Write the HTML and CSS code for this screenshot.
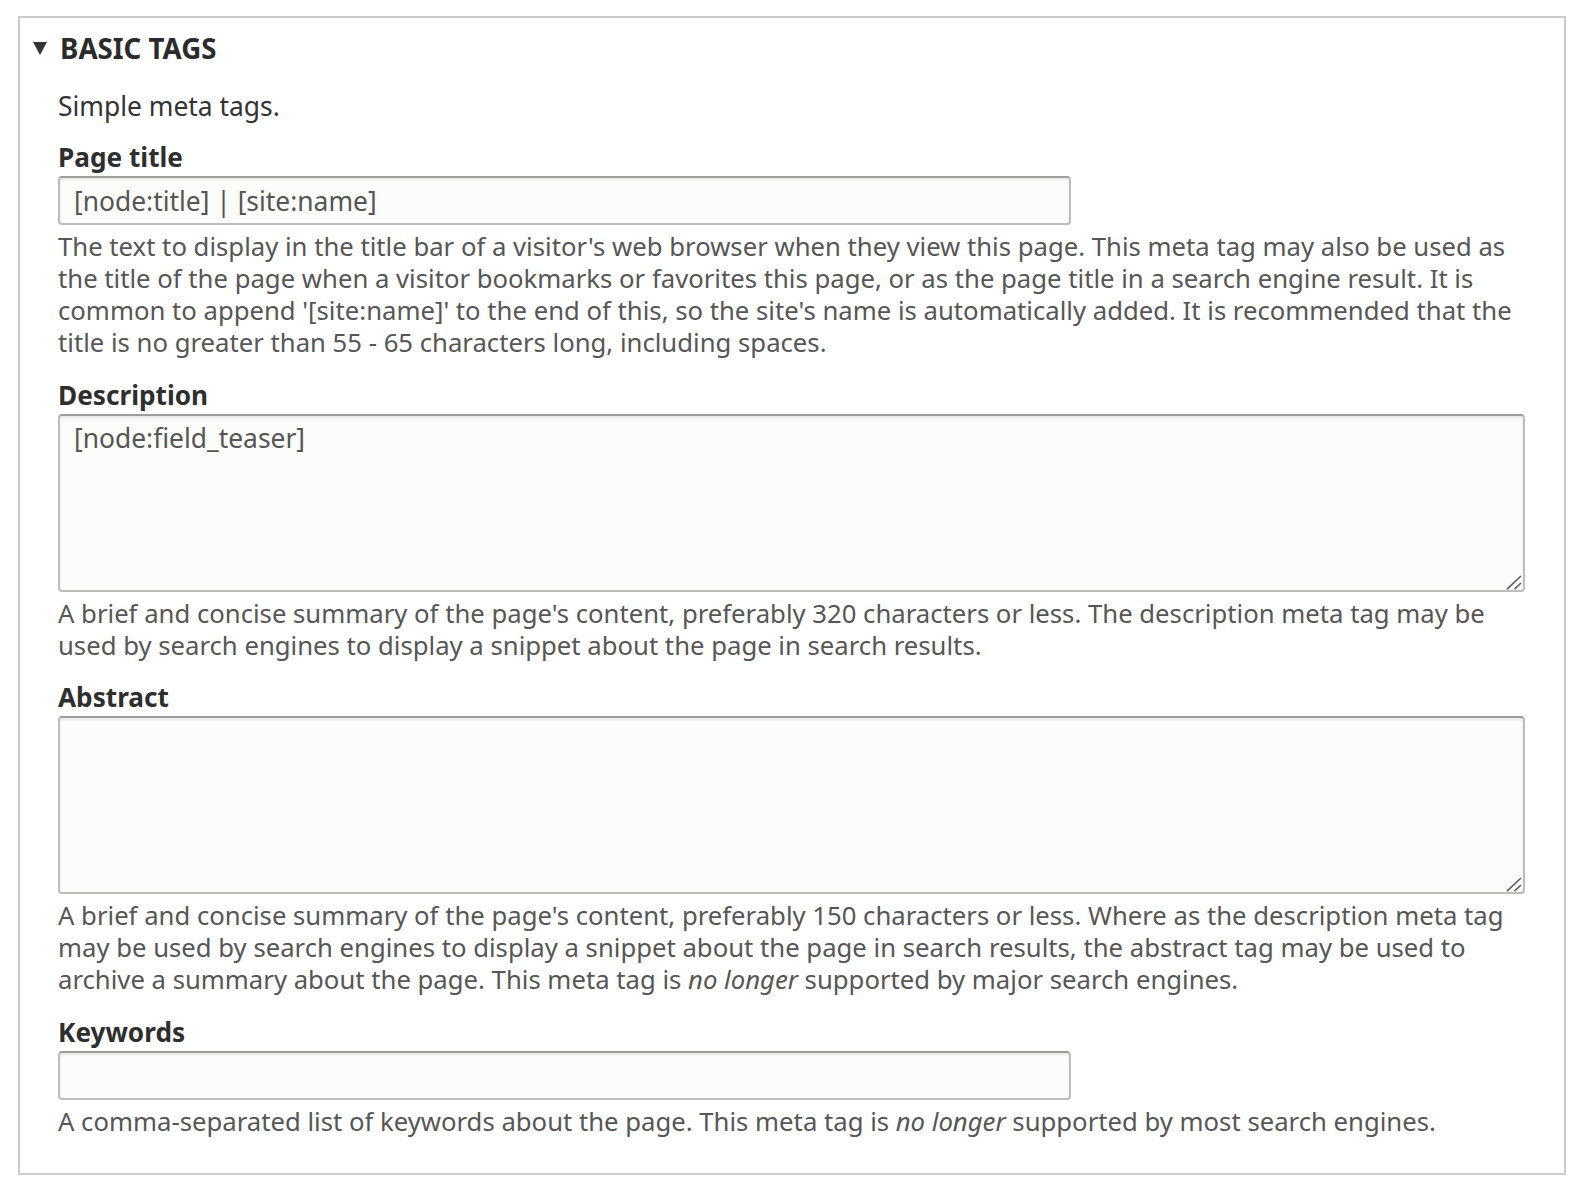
FILE: index.html
```html
<!DOCTYPE html>
<html lang="en">
<head>
<meta charset="utf-8">
<title>Basic tags</title>
<link rel="stylesheet" href="styles.css">
</head>
<body>
<div class="fieldset">
  <div class="summary">
    <svg class="caret" width="14" height="13" viewBox="0 0 14 13" aria-hidden="true"><polygon points="0,0 14,0 7,13" fill="#333"/></svg>
    <span class="summary-title">Basic tags</span>
  </div>
  <div class="fieldset-body">
    <p class="intro">Simple meta tags.</p>

    <div class="form-item">
      <label class="form-label" for="f-title">Page title</label>
      <input class="form-text" id="f-title" type="text" value="[node:title] | [site:name]">
      <div class="description">The text to display in the title bar of a visitor's web browser when they view this page. This meta tag may also be used as the title of the page when a visitor bookmarks or favorites this page, or as the page title in a search engine result. It is common to append '[site:name]' to the end of this, so the site's name is automatically added. It is recommended that the title is no greater than 55 - 65 characters long, including spaces.</div>
    </div>

    <div class="form-item">
      <label class="form-label" for="f-desc">Description</label>
      <div class="textarea-wrap">
        <textarea class="form-textarea" id="f-desc">[node:field_teaser]</textarea>
        <svg class="grip" width="16" height="15" viewBox="0 0 16 15" aria-hidden="true"><path d="M1 14.2 L15 1 M8.5 14.2 L15 8" stroke="#5e5e5e" stroke-width="1.6" fill="none"/></svg>
      </div>
      <div class="description">A brief and concise summary of the page's content, preferably 320 characters or less. The description meta tag may be used by search engines to display a snippet about the page in search results.</div>
    </div>

    <div class="form-item">
      <label class="form-label" for="f-abstract">Abstract</label>
      <div class="textarea-wrap">
        <textarea class="form-textarea" id="f-abstract"></textarea>
        <svg class="grip" width="16" height="15" viewBox="0 0 16 15" aria-hidden="true"><path d="M1 14.2 L15 1 M8.5 14.2 L15 8" stroke="#5e5e5e" stroke-width="1.6" fill="none"/></svg>
      </div>
      <div class="description"><span>A brief and concise summary of the page's content, preferably 150 characters or less. Where as the description meta tag may be used by search engines to display a snippet about the page in search results, the abstract tag may be used to</span> <span>archive a summary about the page. This meta tag is</span> <em>no longer</em> supported by major search engines.</div>
    </div>

    <div class="form-item">
      <label class="form-label" for="f-keywords">Keywords</label>
      <input class="form-text" id="f-keywords" type="text" value="">
      <div class="description">A comma-separated list of keywords about the page. This meta tag is <em>no longer</em> supported by most search engines.</div>
    </div>
  </div>
</div>
</body>
</html>
```
FILE: styles.css
```css
* {
  box-sizing: border-box;
}

html {
  background: #fff;
}

body {
  margin: 0;
  padding: 16px 22px 17px 18px;
  font-family: "Noto Sans", "DejaVu Sans", sans-serif;
  color: #333;
}

.fieldset {
  border: 2px solid #ccc;
  padding: 14px 39px 35.5px 13px;
}

.summary {
  display: flex;
  align-items: center;
  gap: 13px;
  height: 32px;
}

.caret {
  display: block;
  flex: none;
}

.summary-title {
  font-weight: 700;
  font-size: 27.7px;
  line-height: 32px;
  text-transform: uppercase;
  color: #2b2b2b;
}

.fieldset-body {
  padding-left: 25px;
}

.intro {
  margin: 26px 0 19px;
  font-size: 26.4px;
  line-height: 32px;
  color: #333;
}

.form-item + .form-item {
  margin-top: 19.5px;
}

.form-label {
  display: block;
  margin-bottom: 3px;
  font-weight: 700;
  font-size: 26.2px;
  line-height: 32px;
  color: #2e2e2e;
}

.form-text,
.form-textarea {
  display: block;
  margin: 0;
  font-family: "Noto Sans", "DejaVu Sans", sans-serif;
  font-size: 26.4px;
  color: #555;
  background: #fcfcfa;
  border: 2px solid #bdbdbd;
  border-top-color: #9d9d9d;
  border-radius: 4px;
  box-shadow: inset 0 2px 3px rgba(0, 0, 0, 0.08);
  outline: none;
}

.form-text {
  width: 1013px;
  height: 49px;
  padding: 0 14px;
}

.textarea-wrap {
  position: relative;
}

.form-textarea {
  width: 100%;
  height: 178px;
  padding: 6px 14px;
  line-height: 32px;
  resize: none;
}

.grip {
  position: absolute;
  right: 3px;
  bottom: 2px;
  display: block;
  pointer-events: none;
}

.description {
  margin-top: 6px;
  font-size: 25.7px;
  line-height: 32px;
  color: #565656;
}

.description em {
  font-style: italic;
}
```
